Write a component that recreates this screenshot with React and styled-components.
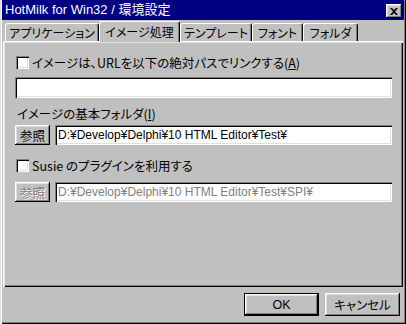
import React from 'react';
import styled, { createGlobalStyle } from 'styled-components';

const GlobalStyle = createGlobalStyle`
  body {
    margin: 0;
    background: #c0c0c0;
    font-family: "Liberation Sans", "Noto Sans CJK JP", sans-serif;
    font-size: 12px;
    color: #000;
  }
`;

const tabs = ['アプリケーション', 'イメージ処理', 'テンプレート', 'フォント', 'フォルダ'];
const tabWidths = [94, 81, 72, 51, 55];

const App = () => {
  return (
    <Window>
      <GlobalStyle />
      <TitleBar>
        <Title>HotMilk for Win32 / 環境設定</Title>
        <CloseButton>
          <svg width="8" height="7" viewBox="0 0 8 7">
            <path d="M0 0h2l2 2 2-2h2L5 3.5 8 7H6L4 5 2 7H0l3-3.5z" fill="#000" />
          </svg>
        </CloseButton>
      </TitleBar>

      <TabRow>
        {tabs.map((t, i) => (
          <Tab key={t} $active={i === 1} style={{ width: tabWidths[i] }}>
            {t}
          </Tab>
        ))}
      </TabRow>

      <Panel>
        <CheckRow>
          <CheckBox />
          <span>イメージは、URLを以下の絶対パスでリンクする(<u>A</u>)</span>
        </CheckRow>
        <Edit defaultValue="" $full />

        <FieldLabel>イメージの基本フォルダ(<u>I</u>)</FieldLabel>
        <BrowseRow>
          <SmallButton>参照</SmallButton>
          <Edit readOnly defaultValue="D:¥Develop¥Delphi¥10 HTML Editor¥Test¥" />
        </BrowseRow>

        <CheckRow $top={14}>
          <CheckBox />
          <span>Susie のプラグインを利用する</span>
        </CheckRow>
        <BrowseRow $top={10}>
          <SmallButton disabled>参照</SmallButton>
          <Edit readOnly disabled defaultValue="D:¥Develop¥Delphi¥10 HTML Editor¥Test¥SPI¥" />
        </BrowseRow>
      </Panel>

      <ButtonRow>
        <DialogButton $default>OK</DialogButton>
        <DialogButton>キャンセル</DialogButton>
      </ButtonRow>
    </Window>
  );
};

const Window = styled.div`
  width: 406px;
  height: 324px;
  box-sizing: border-box;
  padding: 0 2px 2px 2px;
  background: #c0c0c0;
  display: flex;
  flex-direction: column;
  box-shadow: inset 1px 0 #dfdfdf, inset 2px 0 #fff, inset -1px -1px #000, inset -2px -2px #808080;
`;

const TitleBar = styled.div`
  height: 20px;
  flex: none;
  background: #000080;
  display: flex;
  align-items: center;
  justify-content: space-between;
  padding: 0 2px 0 3px;
`;

const Title = styled.span`
  color: #fff;
  font-size: 13px;
  line-height: 20px;
`;

const CloseButton = styled.div`
  width: 16px;
  height: 14px;
  box-sizing: border-box;
  background: #c0c0c0;
  display: flex;
  align-items: center;
  justify-content: center;
  margin-top: 2px;
  box-shadow: inset -1px -1px #000, inset 1px 1px #fff, inset -2px -2px #808080, inset 2px 2px #dfdfdf;
`;

const TabRow = styled.div`
  height: 21px;
  flex: none;
  display: flex;
  align-items: flex-end;
  padding-left: 3px;
`;

const Tab = styled.div`
  box-sizing: border-box;
  height: ${(p) => (p.$active ? '21px' : '18px')};
  margin-bottom: ${(p) => (p.$active ? '-1px' : '0')};
  position: relative;
  z-index: ${(p) => (p.$active ? 1 : 0)};
  background: #c0c0c0;
  border: 1px solid;
  border-color: #fff #000 transparent #fff;
  border-bottom: none;
  border-radius: 3px 3px 0 0;
  box-shadow: inset -1px 0 #808080;
  display: flex;
  align-items: center;
  justify-content: center;
  padding-bottom: ${(p) => (p.$active ? '2px' : '0')};
  font-family: "Noto Sans CJK JP", sans-serif;
  font-feature-settings: "palt";
  font-size: 12px;
  white-space: nowrap;
`;

const Panel = styled.div`
  height: 246px;
  flex: none;
  box-sizing: border-box;
  margin: 0 1px;
  padding: 15px 11px 0 12px;
  display: flex;
  flex-direction: column;
  box-shadow: inset 1px 1px #fff, inset 2px 2px #dfdfdf, inset -1px -1px #000, inset -2px -2px #808080;
`;

const CheckRow = styled.div`
  height: 13px;
  display: flex;
  align-items: center;
  gap: 3px;
  margin-top: ${(p) => p.$top || 0}px;
  padding-left: 1px;
  font-family: "Noto Sans CJK JP", sans-serif;
  font-feature-settings: "palt";
  font-size: 12.5px;
  white-space: nowrap;

  u {
    text-underline-offset: 1px;
  }
`;

const CheckBox = styled.span`
  width: 13px;
  height: 13px;
  flex: none;
  box-sizing: border-box;
  background: #fff;
  box-shadow: inset 1px 1px #808080, inset 2px 2px #000, inset -1px -1px #fff, inset -2px -2px #dfdfdf;
`;

const Edit = styled.input`
  box-sizing: border-box;
  height: ${(p) => (p.$full ? '21px' : '20px')};
  margin-top: ${(p) => (p.$full ? '8px' : '0')};
  flex: ${(p) => (p.$full ? 'none' : '1')};
  min-width: 0;
  width: ${(p) => (p.$full ? '377px' : 'auto')};
  border: none;
  outline: none;
  padding: 0 3px;
  background: #fff;
  font-family: "Liberation Sans", "Noto Sans CJK JP", sans-serif;
  font-size: 12px;
  color: #000;
  box-shadow: inset 1px 1px #808080, inset 2px 2px #000, inset -1px -1px #fff, inset -2px -2px #dfdfdf;

  &:disabled {
    color: #808080;
    background: #fff;
  }
`;

const FieldLabel = styled.div`
  margin-top: 9px;
  height: 14px;
  line-height: 14px;
  padding-left: 2px;
  font-family: "Noto Sans CJK JP", sans-serif;
  font-feature-settings: "palt";
  font-size: 12.5px;
  white-space: nowrap;
`;

const BrowseRow = styled.div`
  height: 20px;
  display: flex;
  gap: 5px;
  margin-top: ${(p) => (p.$top !== undefined ? p.$top : 4)}px;
`;

const bevel = `
  box-shadow: inset -1px -1px #000, inset 1px 1px #fff, inset -2px -2px #808080, inset 2px 2px #dfdfdf;
`;

const SmallButton = styled.button`
  width: 35px;
  height: 20px;
  flex: none;
  box-sizing: border-box;
  padding: 0;
  border: none;
  background: #c0c0c0;
  font-family: "Noto Sans CJK JP", sans-serif;
  font-size: 12.5px;
  color: #000;
  ${bevel}

  &:disabled {
    color: #808080;
    text-shadow: 1px 1px #fff;
  }
`;

const ButtonRow = styled.div`
  display: flex;
  justify-content: flex-end;
  gap: 6px;
  margin-top: 6px;
  padding-right: 4px;
`;

const DialogButton = styled.button`
  width: 75px;
  height: 23px;
  box-sizing: border-box;
  padding: 0;
  background: #c0c0c0;
  font-family: "Liberation Sans", "Noto Sans CJK JP", sans-serif;
  font-feature-settings: "palt";
  font-size: 12.5px;
  color: #000;
  border: ${(p) => (p.$default ? '1px solid #000' : 'none')};
  ${bevel}
`;

export default App;
